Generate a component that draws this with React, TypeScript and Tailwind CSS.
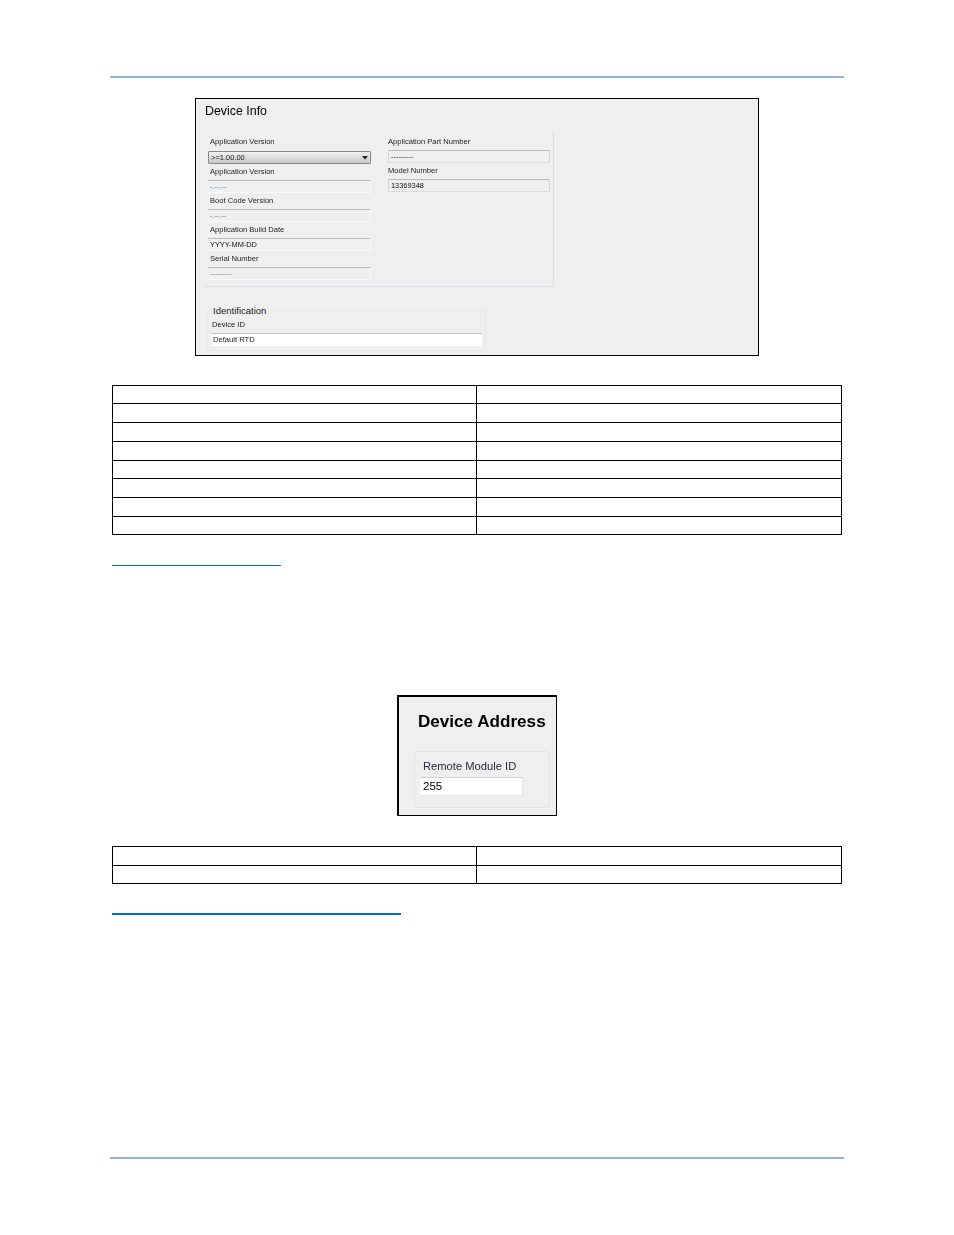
const sans = "font-['Liberation_Sans',Arial,sans-serif]";

function Label({ children, className = "" }: { children: string; className?: string }) {
  return <div className={`h-[9px] text-[7.6px] leading-[9px] text-[#1c1c1c] whitespace-nowrap ${className}`}>{children}</div>;
}

function Field({ value, full = false, dim = false }: { value: string; full?: boolean; dim?: boolean }) {
  return (
    <div
      className={`h-[13px] pl-[2px] text-[7.4px] leading-[12px] border-t border-[#bcbcbc] whitespace-nowrap ${
        full ? "pl-[1px] border-l border-r border-b border-l-[#d4d4d4] border-r-[#d4d4d4] border-b-[#dcdcdc]" : "border-r border-b border-r-[#f8f8f8] border-b-[#fafafa]"
      } ${dim ? "text-[#5b87a8]" : "text-[#141414]"}`}
    >
      {value}
    </div>
  );
}

function DataTable({ rows }: { rows: string[] }) {
  return (
    <div className="ml-[112px] w-[730px] border-t border-l border-r border-black">
      {rows.map((h, i) => (
        <div key={i} className={`grid grid-cols-[364px_1fr] border-b border-black ${h}`}>
          <div className="border-r border-black" />
          <div />
        </div>
      ))}
    </div>
  );
}

export default function App() {
  return (
    <div className={`${sans} w-[954px] h-[1235px] bg-white flex flex-col overflow-hidden`}>
      <div className="mt-[76px] ml-[110px] w-[734px] h-[2px] bg-[#95b3d7]" />

      <div className="mt-[20px] ml-[195px] w-[564px] h-[258px] border border-black bg-[#efefef]">
        <div className="flex flex-col blur-[0.3px]">
          <div className="mt-[5px] ml-[9px] h-[14px] text-[12.4px] leading-[14px] text-black">Device Info</div>

          <div className="mt-[13px] ml-[9px] w-[349px] h-[156px] border-r border-b border-[#d6dfe8] rounded-[2px] flex">
            <div className="ml-[3px] w-[163px] pt-[6px] flex flex-col">
              <Label className="ml-[2px]">Application Version</Label>
              <div className="relative mt-[5px] h-[13px] border border-[#8a8a8a] rounded-[1px] bg-gradient-to-b from-[#f2f2f2] to-[#c9c9c9] pl-[2px] text-[7.5px] leading-[11px] text-[#141414]">
                &gt;=1.00.00
                <svg className="absolute right-[2px] top-[4px]" width="6" height="4" viewBox="0 0 6 4">
                  <path d="M0 0H6L3 3.5Z" fill="#222222" />
                </svg>
              </div>
              <Label className="ml-[2px] mt-[3px]">Application Version</Label>
              <div className="mt-[4px]"><Field value="-.--.--" dim /></div>
              <Label className="ml-[2px] mt-[3px]">Boot Code Version</Label>
              <div className="mt-[4px]"><Field value="-.--.--" dim /></div>
              <Label className="ml-[2px] mt-[3px]">Application Build Date</Label>
              <div className="mt-[4px]"><Field value="YYYY-MM-DD" /></div>
              <Label className="ml-[2px] mt-[3px]">Serial Number</Label>
              <div className="mt-[4px]"><Field value="---------" dim /></div>
            </div>
            <div className="ml-[17px] w-[162px] pt-[6px] flex flex-col">
              <Label>Application Part Number</Label>
              <div className="mt-[4px]"><Field value="---------" full /></div>
              <Label className="mt-[3px]">Model Number</Label>
              <div className="mt-[4px]"><Field value="13369348" full /></div>
            </div>
          </div>

          <div className="relative mt-[23px] ml-[11px] w-[279px] h-[41px] border border-[#e8e8e8] rounded-[2px]">
            <div className="absolute left-[5px] top-[-6px] bg-[#efefef] pr-[1px] text-[9.5px] leading-[12px] text-[#222222]">Identification</div>
            <div className="ml-[4px] mt-[9px] h-[9px] text-[7.6px] leading-[9px] text-[#141414]">Device ID</div>
            <div className="ml-[3px] mt-[4px] w-[271px] h-[13px] bg-white border-t border-[#c8c8c8] pl-[2px] text-[7.6px] leading-[12px] text-[#1c1c1c]">Default RTD</div>
          </div>
        </div>
      </div>

      <div className="mt-[29px]">
        <DataTable rows={["h-[18px]", "h-[19px]", "h-[19px]", "h-[19px]", "h-[18px]", "h-[19px]", "h-[19px]", "h-[18px]"]} />
      </div>

      <div className="mt-[30px] ml-[112px] w-[169px] h-px bg-[#0070c0]" />

      <div className="mt-[129px] ml-[397px] w-[160px] h-[121px] border-t-2 border-l-2 border-r border-b border-black bg-[#efefef]">
        <div className="flex flex-col blur-[0.25px]">
          <div className="mt-[15px] ml-[19px] h-[20px] text-[17.1px] leading-[20px] font-bold text-black whitespace-nowrap">Device Address</div>
          <div className="mt-[19px] ml-[15px] w-[136px] h-[57px] border border-[#e2e6ea] rounded-[3px] flex flex-col">
            <div className="mt-[7px] ml-[8px] h-[14px] text-[11.2px] leading-[14px] text-[#2a2a3a] whitespace-nowrap">Remote Module ID</div>
            <div className="mt-[4px] ml-[5px] w-[103px] h-[19px] bg-white border-t border-[#d0d0d0] border-r border-r-[#e4e4e4] border-b border-b-[#e4e4e4] pl-[3px] text-[11.5px] leading-[17px] text-black">255</div>
          </div>
        </div>
      </div>

      <div className="mt-[30px]">
        <DataTable rows={["h-[19px]", "h-[18px]"]} />
      </div>

      <div className="mt-[29px] ml-[112px] w-[289px] h-[2px] bg-[#0070c0]" />

      <div className="mt-[242px] ml-[110px] w-[734px] h-[2px] bg-[#95b3d7]" />
    </div>
  );
}
